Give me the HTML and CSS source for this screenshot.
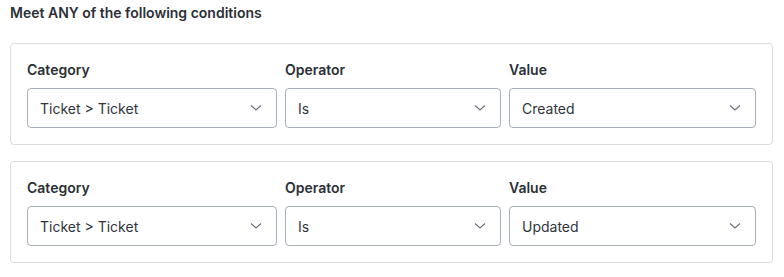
FILE: index.html
```html
<!DOCTYPE html>
<html lang="en">
<head>
    <meta charset="UTF-8">
    <title>Conditions</title>
    <link rel="stylesheet" href="styles.css">
</head>
<body>
    <div class="conditions">
        <h3 class="title">Meet ANY of the following conditions</h3>
        <div class="condition">
            <div class="field">
                <label>Category</label>
                <div class="select"><span>Ticket &gt; Ticket</span><svg width="12" height="6" viewBox="0 0 12 6"><path d="M1 0.5l5 4.5 5-4.5" fill="none" stroke="#6b7280" stroke-width="1.2"/></svg></div>
            </div>
            <div class="field">
                <label>Operator</label>
                <div class="select"><span>Is</span><svg width="12" height="6" viewBox="0 0 12 6"><path d="M1 0.5l5 4.5 5-4.5" fill="none" stroke="#6b7280" stroke-width="1.2"/></svg></div>
            </div>
            <div class="field">
                <label>Value</label>
                <div class="select"><span>Created</span><svg width="12" height="6" viewBox="0 0 12 6"><path d="M1 0.5l5 4.5 5-4.5" fill="none" stroke="#6b7280" stroke-width="1.2"/></svg></div>
            </div>
        </div>
        <div class="condition">
            <div class="field">
                <label>Category</label>
                <div class="select"><span>Ticket &gt; Ticket</span><svg width="12" height="6" viewBox="0 0 12 6"><path d="M1 0.5l5 4.5 5-4.5" fill="none" stroke="#6b7280" stroke-width="1.2"/></svg></div>
            </div>
            <div class="field">
                <label>Operator</label>
                <div class="select"><span>Is</span><svg width="12" height="6" viewBox="0 0 12 6"><path d="M1 0.5l5 4.5 5-4.5" fill="none" stroke="#6b7280" stroke-width="1.2"/></svg></div>
            </div>
            <div class="field">
                <label>Value</label>
                <div class="select"><span>Updated</span><svg width="12" height="6" viewBox="0 0 12 6"><path d="M1 0.5l5 4.5 5-4.5" fill="none" stroke="#6b7280" stroke-width="1.2"/></svg></div>
            </div>
        </div>
    </div>
</body>
</html>
```

FILE: styles.css
```css
body {
    font-family: Inter, "Noto Sans", sans-serif;
    margin: 0;
    padding: 0;
    background: #ffffff;
    color: #2b3036;
}
.conditions {
    padding: 3px 11px 0 10px;
}
.title {
    margin: 0 0 20px 0;
    font-size: 14px;
    font-weight: 600;
    line-height: 20px;
    color: #2b3036;
}
.condition {
    display: grid;
    grid-template-columns: 250px 216px 1fr;
    gap: 8px;
    border: 1px solid #dcdcdc;
    border-radius: 4px;
    padding: 16px;
    margin-bottom: 16px;
}
.field {
    display: flex;
    flex-direction: column;
    gap: 8px;
}
.field label {
    font-size: 14px;
    font-weight: 600;
    line-height: 20px;
    color: #2b3036;
}
.select {
    display: flex;
    align-items: center;
    justify-content: space-between;
    height: 40px;
    box-sizing: border-box;
    border: 1px solid #a8afb8;
    border-radius: 4px;
    padding: 0 14px 0 12px;
    font-size: 14px;
    color: #30353b;
}
```
